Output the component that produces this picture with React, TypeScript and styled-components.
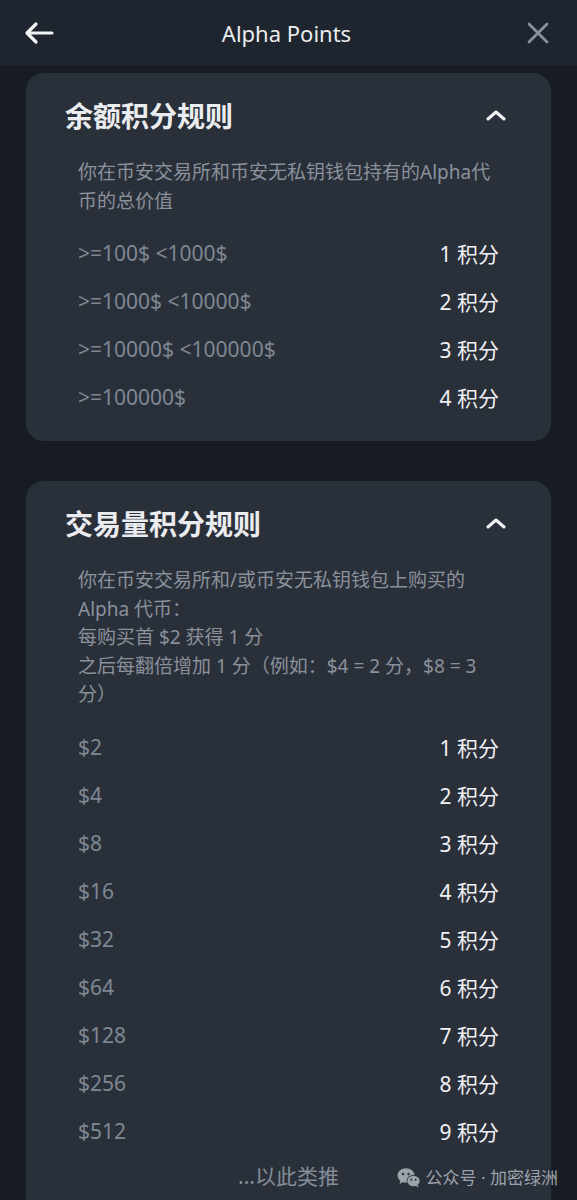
import React from "react";
import styled, { createGlobalStyle } from "styled-components";

const Global = createGlobalStyle`
  html, body {
    margin: 0;
    padding: 0;
    background: #171c23;
  }
  body {
    font-family: "Noto Sans", "Noto Sans CJK SC", sans-serif;
    -webkit-font-smoothing: antialiased;
  }
`;

const Page = styled.div`
  position: relative;
  width: 577px;
  height: 1200px;
  overflow: hidden;
  background: #171c23;
`;

const Header = styled.header`
  height: 65px;
  display: grid;
  grid-template-columns: 1fr auto 1fr;
  align-items: center;
  padding: 0 28px 0 24px;
  background: #1e252e;
  box-sizing: border-box;
`;

const IconButton = styled.button<{ $align: "start" | "end" }>`
  justify-self: ${(p) => p.$align};
  display: flex;
  align-items: center;
  background: none;
  border: 0;
  padding: 0;
  cursor: pointer;
`;

const HeaderTitle = styled.h1`
  margin: 0;
  font-family: "Noto Sans", sans-serif;
  font-size: 22px;
  font-weight: 400;
  color: #eaecef;
  line-height: 1;
`;

const Content = styled.main`
  display: flex;
  flex-direction: column;
  gap: 40px;
  padding: 8px 26px 0;
`;

const Card = styled.section`
  background: #2a303a;
  border-radius: 18px;
  padding: 24px 45px 20px 39px;
`;

const CardHead = styled.div`
  display: flex;
  align-items: center;
  justify-content: space-between;
  height: 36px;
`;

const CardTitle = styled.h2`
  margin: 0;
  font-family: "Noto Sans CJK SC", sans-serif;
  font-size: 28px;
  font-weight: 700;
  line-height: 36px;
  color: #eaecef;
`;

const CardBody = styled.div`
  margin-top: 25px;
  padding: 0 7px 0 13px;
`;

const Description = styled.p`
  margin: 0 0 14px;
  font-size: 19px;
  line-height: 28.5px;
  color: #8a919b;
`;

const Row = styled.div`
  height: 48px;
  display: flex;
  align-items: center;
  justify-content: space-between;
`;

const RowLabel = styled.span`
  font-size: 21px;
  color: #7f8792;
`;

const RowValue = styled.span`
  font-size: 21px;
  font-weight: 400;
  color: #f0f1f3;
`;

const More = styled.div`
  height: 40px;
  display: flex;
  align-items: center;
  justify-content: center;
  font-size: 21px;
  color: #848c97;
`;

const Watermark = styled.div`
  position: absolute;
  top: 1166px;
  right: 19px;
  display: flex;
  align-items: center;
  gap: 5px;
  font-family: "Noto Sans", "Noto Sans CJK SC", sans-serif;
  font-size: 17px;
  color: #9da3ab;
  line-height: 24px;
`;

const BackIcon = () => (
  <svg width="30" height="24" viewBox="0 0 30 24" fill="none">
    <path
      d="M28 12H3M12 3L3 12L12 21"
      stroke="#f2f3f5"
      strokeWidth="3.2"
      strokeLinecap="round"
      strokeLinejoin="round"
    />
  </svg>
);

const CloseIcon = () => (
  <svg width="22" height="22" viewBox="0 0 22 22" fill="none">
    <path
      d="M2 2L20 20M20 2L2 20"
      stroke="#8b929c"
      strokeWidth="2.8"
      strokeLinecap="round"
    />
  </svg>
);

const ChevronUp = () => (
  <svg width="20" height="12" viewBox="0 0 20 12" fill="none">
    <path
      d="M2 10L10 3L18 10"
      stroke="#f2f3f5"
      strokeWidth="3"
      strokeLinecap="round"
      strokeLinejoin="round"
    />
  </svg>
);

const WeChatIcon = () => (
  <svg width="24" height="22" viewBox="0 0 24 22">
    <ellipse cx="9" cy="8.5" rx="8.5" ry="7.3" fill="#9da3ab" />
    <path d="M3.5 13.5L2.5 17L6.5 14.8Z" fill="#9da3ab" />
    <circle cx="6" cy="7" r="1.2" fill="#2a303a" />
    <circle cx="11.5" cy="7" r="1.2" fill="#2a303a" />
    <ellipse cx="16.5" cy="14" rx="7" ry="6" fill="#2a303a" />
    <ellipse cx="16.5" cy="14" rx="6.2" ry="5.3" fill="#9da3ab" />
    <path d="M20.5 17.5L21.8 20.5L18.3 18.8Z" fill="#9da3ab" />
    <circle cx="14.3" cy="12.8" r="1" fill="#2a303a" />
    <circle cx="18.7" cy="12.8" r="1" fill="#2a303a" />
  </svg>
);

type RuleRow = { label: string; points: number };

const balanceRows: RuleRow[] = [
  { label: ">=100$ <1000$", points: 1 },
  { label: ">=1000$ <10000$", points: 2 },
  { label: ">=10000$ <100000$", points: 3 },
  { label: ">=100000$", points: 4 },
];

const volumeRows: RuleRow[] = [2, 4, 8, 16, 32, 64, 128, 256, 512].map((v, i) => ({
  label: `$${v}`,
  points: i + 1,
}));

const RuleCard = ({
  title,
  children,
  rows,
  footer,
}: {
  title: string;
  children: React.ReactNode;
  rows: RuleRow[];
  footer?: React.ReactNode;
}) => (
  <Card>
    <CardHead>
      <CardTitle>{title}</CardTitle>
      <ChevronUp />
    </CardHead>
    <CardBody>
      <Description>{children}</Description>
      {rows.map((r) => (
        <Row key={r.label}>
          <RowLabel>{r.label}</RowLabel>
          <RowValue>{r.points} 积分</RowValue>
        </Row>
      ))}
      {footer}
    </CardBody>
  </Card>
);

export default function App() {
  return (
    <Page>
      <Global />
      <Header>
        <IconButton $align="start" aria-label="back">
          <BackIcon />
        </IconButton>
        <HeaderTitle>Alpha Points</HeaderTitle>
        <IconButton $align="end" aria-label="close">
          <CloseIcon />
        </IconButton>
      </Header>
      <Content>
        <RuleCard title="余额积分规则" rows={balanceRows}>
          你在币安交易所和币安无私钥钱包持有的Alpha代币的总价值
        </RuleCard>
        <RuleCard
          title="交易量积分规则"
          rows={volumeRows}
          footer={<More>...以此类推</More>}
        >
          你在币安交易所和/或币安无私钥钱包上购买的
          <br />
          Alpha 代币：
          <br />
          每购买首 $2 获得 1 分
          <br />
          之后每翻倍增加 1 分（例如：$4 = 2 分，$8 = 3 分）
        </RuleCard>
      </Content>
      <Watermark>
        <WeChatIcon />
        公众号 · 加密绿洲
      </Watermark>
    </Page>
  );
}
